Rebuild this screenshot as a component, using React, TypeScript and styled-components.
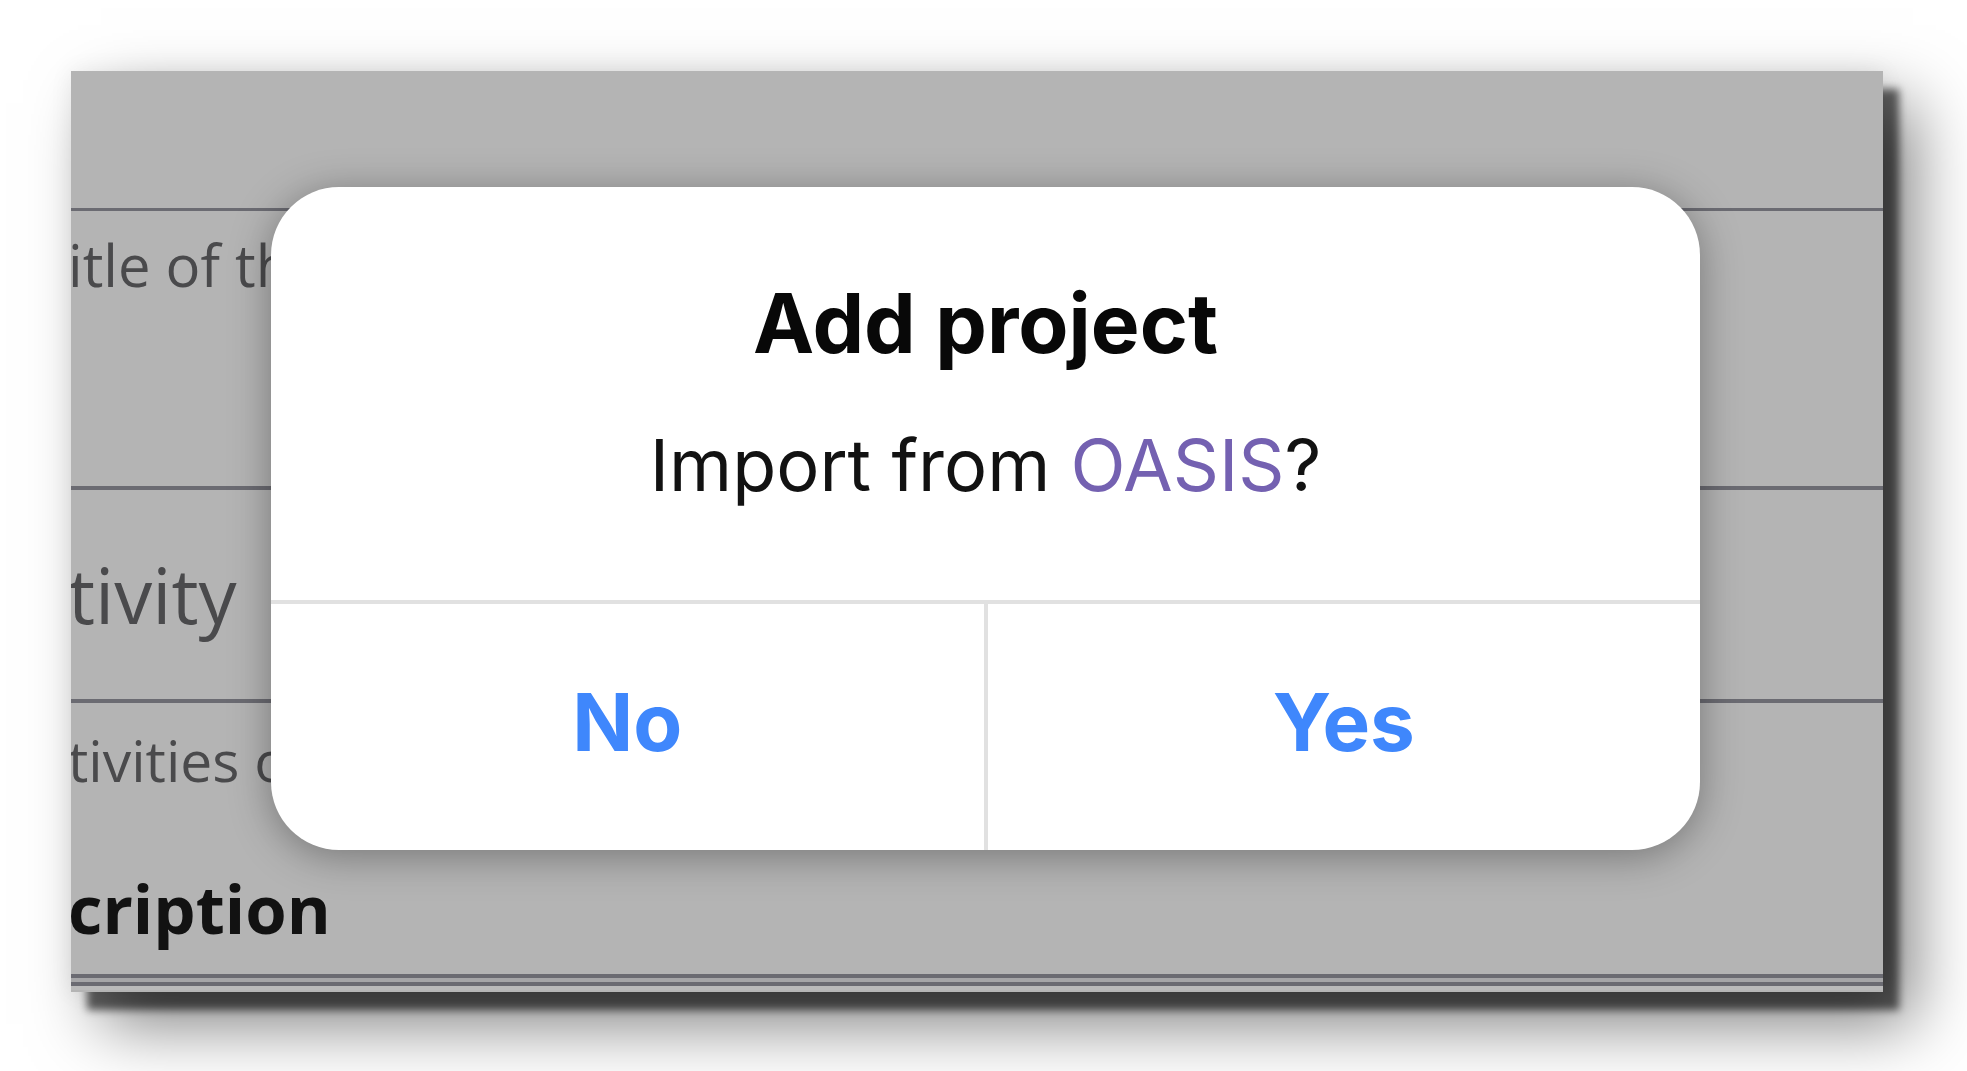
import React from "react";
import styled, { createGlobalStyle } from "styled-components";

const GlobalStyle = createGlobalStyle`
  html, body {
    margin: 0;
    padding: 0;
    background: #ffffff;
  }
  body {
    font-family: "Open Sans", "Liberation Sans", sans-serif;
  }
`;

const Page = styled.div`
  width: 1967px;
  height: 1071px;
  padding: 71px 0 0 71px;
  box-sizing: border-box;
  background: #ffffff;
  overflow: hidden;
`;

const Frame = styled.div`
  position: relative;
  width: 1812px;
  height: 921px;
  background: #b4b4b4;
  overflow: hidden;
  display: flex;
  flex-direction: column;
  box-shadow: 16px 18px 8px rgba(0, 0, 0, 0.6), 30px 32px 64px rgba(0, 0, 0, 0.5),
    0 0 22px rgba(0, 0, 0, 0.07);
`;

const Header = styled.div`
  height: 137px;
  flex: none;
  border-bottom: 3px solid #6b6b72;
`;

const Row = styled.div<{ $h: number; $pt: number }>`
  height: ${(p) => p.$h}px;
  flex: none;
  box-sizing: border-box;
  padding-top: ${(p) => p.$pt}px;
  border-bottom: 4px solid #6b6b72;
  display: flex;
  flex-direction: column;
`;

const FieldText = styled.div<{ $size: number; $bold?: boolean; $gap?: number }>`
  font-family: "Open Sans", "Liberation Sans", sans-serif;
  font-size: ${(p) => p.$size}px;
  line-height: ${(p) => Math.round(p.$size * 1.2)}px;
  font-weight: ${(p) => (p.$bold ? 700 : 400)};
  color: ${(p) => (p.$bold ? "#121212" : "#4a4a4c")};
  white-space: nowrap;
  margin-top: ${(p) => p.$gap ?? 0}px;
  margin-left: -3px;
`;

const BottomRule = styled.div`
  flex: none;
  height: 12px;
  box-sizing: border-box;
  border-top: 4px solid #a6a6a8;
  border-bottom: 4px solid #bababa;
  background: #6b6b72;
`;

const Dialog = styled.div`
  position: absolute;
  left: 200px;
  top: 116px;
  width: 1429px;
  height: 663px;
  background: #ffffff;
  border-radius: 68px;
  box-shadow: 0 6px 40px rgba(0, 0, 0, 0.35);
  display: flex;
  flex-direction: column;
  overflow: hidden;
  font-family: "Inter", "Noto Sans", sans-serif;
`;

const DialogBody = styled.div`
  height: 417px;
  flex: none;
  box-sizing: border-box;
  padding-top: 89px;
  display: flex;
  flex-direction: column;
  align-items: center;
  border-bottom: 4px solid #e1e1e1;
`;

const Title = styled.div`
  font-size: 82px;
  line-height: 96px;
  font-weight: 700;
  color: #080808;
`;

const Message = styled.div`
  margin-top: 50px;
  font-size: 72px;
  line-height: 86px;
  font-weight: 400;
  color: #121212;
`;

const Brand = styled.span`
  color: #7461b1;
`;

const Actions = styled.div`
  flex: 1;
  display: flex;
`;

const ActionButton = styled.button<{ $divider?: boolean }>`
  flex: 1;
  border: none;
  border-left: ${(p) => (p.$divider ? "4px solid #e1e1e1" : "none")};
  background: transparent;
  padding: 0 0 10px 0;
  display: flex;
  align-items: center;
  justify-content: center;
  font-family: "Inter", "Noto Sans", sans-serif;
  font-size: 80px;
  line-height: 80px;
  font-weight: 700;
  color: #3f87fc;
  cursor: pointer;
`;

export default function App() {
  return (
    <>
      <GlobalStyle />
      <Page>
        <Frame>
          <Header />
          <Row $h={279} $pt={19}>
            <FieldText $size={58}>itle of the project</FieldText>
          </Row>
          <Row $h={213} $pt={59}>
            <FieldText $size={76}>tivity</FieldText>
          </Row>
          <Row $h={275} $pt={23}>
            <FieldText $size={57}>tivities of the project</FieldText>
            <FieldText $size={67} $bold $gap={74}>
              cription
            </FieldText>
          </Row>
          <BottomRule />
          <Dialog>
            <DialogBody>
              <Title>Add project</Title>
              <Message>
                Import from <Brand>OASIS</Brand>?
              </Message>
            </DialogBody>
            <Actions>
              <ActionButton>No</ActionButton>
              <ActionButton $divider>Yes</ActionButton>
            </Actions>
          </Dialog>
        </Frame>
      </Page>
    </>
  );
}
